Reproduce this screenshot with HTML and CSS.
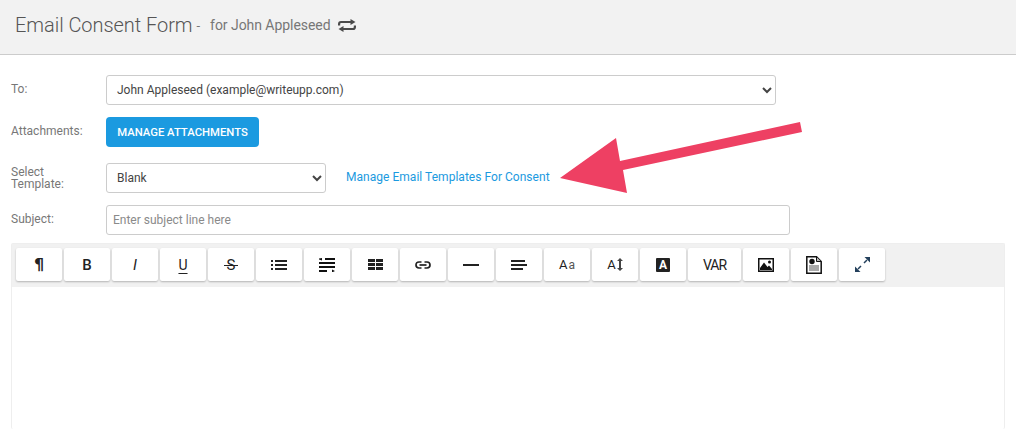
FILE: index.html
```html
<!DOCTYPE html>
<html lang="en">
<head>
  <meta charset="UTF-8">
  <title>Email Consent Form</title>
  <link rel="stylesheet" href="styles.css">
</head>
<body>
  <!-- HEADER -->
  <header class="page-header">
    <h1>Email Consent Form</h1>
    <span class="dash">-</span>
    <span class="for-name">for John Appleseed</span>
    <svg class="swap-icon" width="18" height="13" viewBox="0 0 18 13">
      <path d="M1.1 6.5V5Q1.1 3 3 3H13" fill="none" stroke="#4a4a4a" stroke-width="2.2"/>
      <path d="M12.5 0L17.5 3L12.5 6Z" fill="#4a4a4a"/>
      <path d="M16.9 6.5V8Q16.9 10 15 10H5" fill="none" stroke="#4a4a4a" stroke-width="2.2"/>
      <path d="M5.5 7L0.5 10L5.5 13Z" fill="#4a4a4a"/>
    </svg>
  </header>

  <main class="form">
    <div class="form-row row-to">
      <label class="form-label">To:</label>
      <select class="form-select select-wide">
        <option>John Appleseed (example@writeupp.com)</option>
      </select>
    </div>

    <div class="form-row row-attach">
      <label class="form-label">Attachments:</label>
      <button class="btn-primary">MANAGE ATTACHMENTS</button>
    </div>

    <div class="form-row row-template">
      <label class="form-label label-two-lines">Select Template:</label>
      <select class="form-select select-small">
        <option>Blank</option>
      </select>
      <a class="template-link" href="#">Manage Email Templates For Consent</a>
    </div>

    <div class="form-row row-subject">
      <label class="form-label">Subject:</label>
      <input class="form-input" type="text" placeholder="Enter subject line here">
    </div>

    <!-- EDITOR -->
    <div class="editor">
      <div class="toolbar">
        <button class="tool tool-para">¶</button>
        <button class="tool tool-bold">B</button>
        <button class="tool tool-italic">I</button>
        <button class="tool tool-under">U</button>
        <button class="tool tool-strike"><span class="strike-letter">S</span></button>
        <button class="tool">
          <svg width="16" height="12" viewBox="0 0 16 12" fill="#222">
            <rect x="0" y="1" width="2" height="2"/><rect x="4" y="1" width="12" height="2"/>
            <rect x="0" y="5" width="2" height="2"/><rect x="4" y="5" width="12" height="2"/>
            <rect x="0" y="9" width="2" height="2"/><rect x="4" y="9" width="12" height="2"/>
          </svg>
        </button>
        <button class="tool">
          <svg width="16" height="14" viewBox="0 0 16 14" fill="#111">
            <rect x="6" y="0" width="10" height="2"/><path d="M0 0.5V1.5L3 2.5V0Z"/>
            <rect x="0" y="4" width="16" height="2"/>
            <rect x="0" y="8" width="16" height="2"/>
            <rect x="0" y="12" width="8" height="2"/><path d="M16 13L13 11.5V14.5Z"/>
          </svg>
        </button>
        <button class="tool">
          <svg width="15" height="11" viewBox="0 0 15 11" fill="#222">
            <rect x="0" y="0" width="7" height="3"/><rect x="8" y="0" width="7" height="3"/>
            <rect x="0" y="4" width="7" height="3"/><rect x="8" y="4" width="7" height="3"/>
            <rect x="0" y="8" width="7" height="3"/><rect x="8" y="8" width="7" height="3"/>
          </svg>
        </button>
        <button class="tool">
          <svg width="16" height="8" viewBox="0 0 16 8" fill="none" stroke="#222" stroke-width="1.7">
            <path d="M6.5 1H4Q1 1 1 4T4 7H6.5"/><path d="M9.5 1H12Q15 1 15 4T12 7H9.5"/><path d="M4.5 4H11.5"/>
          </svg>
        </button>
        <button class="tool">
          <svg width="16" height="2" viewBox="0 0 16 2"><rect width="16" height="2" fill="#222"/></svg>
        </button>
        <button class="tool">
          <svg width="16" height="10" viewBox="0 0 16 10" fill="#222">
            <rect y="0" width="14" height="2"/><rect y="4" width="16" height="2"/><rect y="8" width="12" height="2"/>
          </svg>
        </button>
        <button class="tool tool-text"><span class="big-a">A</span><span class="small-a">a</span></button>
        <button class="tool tool-text">
          <span class="big-a">A</span>
          <svg class="height-arrow" width="6" height="13" viewBox="0 0 6 13" fill="#444">
            <path d="M3 0L6 3H4V10H6L3 13L0 10H2V3H0Z"/>
          </svg>
        </button>
        <button class="tool"><span class="color-a">A</span></button>
        <button class="tool tool-var">VAR</button>
        <button class="tool">
          <svg width="16" height="14" viewBox="0 0 16 14">
            <rect x="0.75" y="0.75" width="14.5" height="12.5" fill="#fff" stroke="#111" stroke-width="1.5"/>
            <circle cx="11.5" cy="4" r="1.5" fill="#111"/>
            <path d="M2 12V10L6 4.5L9.5 9L11 7.5L14 11V12Z" fill="#111"/>
          </svg>
        </button>
        <button class="tool">
          <svg width="16" height="18" viewBox="0 0 16 18">
            <path d="M0.8 0.8H10.5L15.2 5.5V17.2H0.8Z" fill="#fff" stroke="#111" stroke-width="1.5"/>
            <path d="M10.5 1V5.5H15" fill="#bbb" stroke="#111"/>
            <circle cx="6" cy="5.5" r="2.7" fill="#111"/>
            <path d="M3 10H13M3 12H13M3 14H13" stroke="#555" stroke-width="1.2"/>
          </svg>
        </button>
        <button class="tool">
          <svg width="15" height="15" viewBox="0 0 15 15" fill="#24405c">
            <path d="M15 0V5.5L9.5 0Z"/>
            <path d="M0 15V9.5L5.5 15Z"/>
            <path d="M12 3L9 6M3 12L6 9" stroke="#24405c" stroke-width="1.5"/>
          </svg>
        </button>
      </div>
      <div class="editor-body"></div>
    </div>
  </main>

  <!-- ANNOTATION ARROW -->
  <svg class="annotation-arrow" width="1016" height="429" viewBox="0 0 1016 429">
    <polygon fill="#ee4063" points="560,178 616,138 620,161 800,122 802,132 623,170 627,193"/>
  </svg>
</body>
</html>
```

FILE: styles.css
```css
/* RESET */
*, *::before, *::after {
  box-sizing: border-box;
}

html, body {
  height: 100%;
  margin: 0;
  overflow: hidden;
}

body {
  position: relative;
  background-color: #fff;
  font-family: "Roboto", "Liberation Sans", sans-serif;
  font-size: 12px;
  color: #444;
}

/* HEADER */
.page-header {
  display: flex;
  align-items: center;
  height: 55px;
  padding: 0 15px 4px;
  background-color: #f2f2f2;
  border-bottom: 1px solid #ccc;
  color: #777;
}

.page-header h1 {
  margin: 0;
  font-size: 20px;
  font-weight: 300;
  letter-spacing: -0.05px;
  color: #555;
}

.dash {
  margin-left: 4px;
  font-size: 13px;
}

.for-name {
  margin-left: 10px;
  font-size: 14px;
  letter-spacing: -0.05px;
}

.swap-icon {
  margin-left: 7px;
}

/* FORM */
.form {
  padding: 20px 11px 0;
}

.form-row {
  display: flex;
  align-items: flex-start;
}

.row-to { margin-bottom: 12px; }
.row-attach { margin-bottom: 16px; }
.row-template { margin-bottom: 12px; }
.row-subject { margin-bottom: 8px; }

.form-label {
  flex: 0 0 95px;
  padding-top: 7px;
  color: #777;
  font-size: 12px;
  line-height: 14px;
}

.label-two-lines {
  flex: 0 0 95px;
  padding-top: 3px;
  padding-right: 35px;
  line-height: 12px;
}

.form-select,
.form-input {
  height: 30px;
  background-color: #fff;
  border: 1px solid #ccc;
  border-radius: 3px;
  font-family: inherit;
  font-size: 12px;
  color: #444;
}

.form-select {
  padding-left: 6px;
}

.select-wide { width: 670px; }
.select-small { width: 220px; }

.form-input {
  width: 684px;
  padding: 0 6px;
  outline: none;
}

.form-input::placeholder {
  color: #8a8a8a;
}

.btn-primary {
  width: 153px;
  height: 30px;
  padding: 0;
  background-color: #1b9ae0;
  border: none;
  border-radius: 4px;
  color: #fff;
  font-family: inherit;
  font-size: 11.3px;
  font-weight: 500;
}

.template-link {
  margin: 7px 0 0 20px;
  color: #1b9ae0;
  font-size: 12px;
  letter-spacing: 0.03px;
  line-height: 14px;
  text-decoration: none;
}

/* EDITOR */
.editor {
  width: 994px;
  background-color: #fff;
  border: 1px solid #eee;
  border-bottom: none;
  border-radius: 2px;
}

.toolbar {
  display: flex;
  gap: 2px;
  height: 43px;
  padding: 4px 4px 0;
  background-color: #f1f1f1;
}

.tool {
  display: flex;
  flex: 0 0 46px;
  align-items: center;
  justify-content: center;
  height: 33px;
  padding: 0;
  background-color: #fff;
  border: none;
  border-radius: 2px;
  box-shadow: 0 1px 2px rgba(0, 0, 0, 0.25);
  font-family: "Roboto", sans-serif;
  font-size: 14px;
  color: #222;
}

.tool-para { font-family: "DejaVu Sans", sans-serif; font-weight: 700; font-size: 16px; }
.tool-bold { font-weight: 500; font-size: 15px; }
.tool-italic { font-style: italic; font-size: 15px; }
.tool-under { text-decoration: underline; font-size: 14px; text-underline-offset: 3px; }
.tool-strike { font-size: 15px; }

.strike-letter {
  position: relative;
}

/* the line runs a little past the letter */
.strike-letter::after {
  content: "";
  position: absolute;
  top: 9px;
  left: -3px;
  right: -3px;
  height: 1px;
  background-color: #222;
}

.tool-var {
  flex-basis: 53px;
  font-size: 14px;
  letter-spacing: -1px;
}

.big-a { font-size: 13px; }
.small-a { font-size: 12px; margin-left: 1px; color: #555; }

.height-arrow {
  margin-left: 1px;
}

.color-a {
  display: flex;
  align-items: center;
  justify-content: center;
  width: 14px;
  height: 14px;
  background-color: #222;
  border-radius: 1px;
  color: #fff;
  font-size: 12px;
  font-weight: 700;
}

.editor-body {
  height: 142px;
}

/* ANNOTATION ARROW */
.annotation-arrow {
  position: absolute;
  top: 0;
  left: 0;
  pointer-events: none;
}
```
